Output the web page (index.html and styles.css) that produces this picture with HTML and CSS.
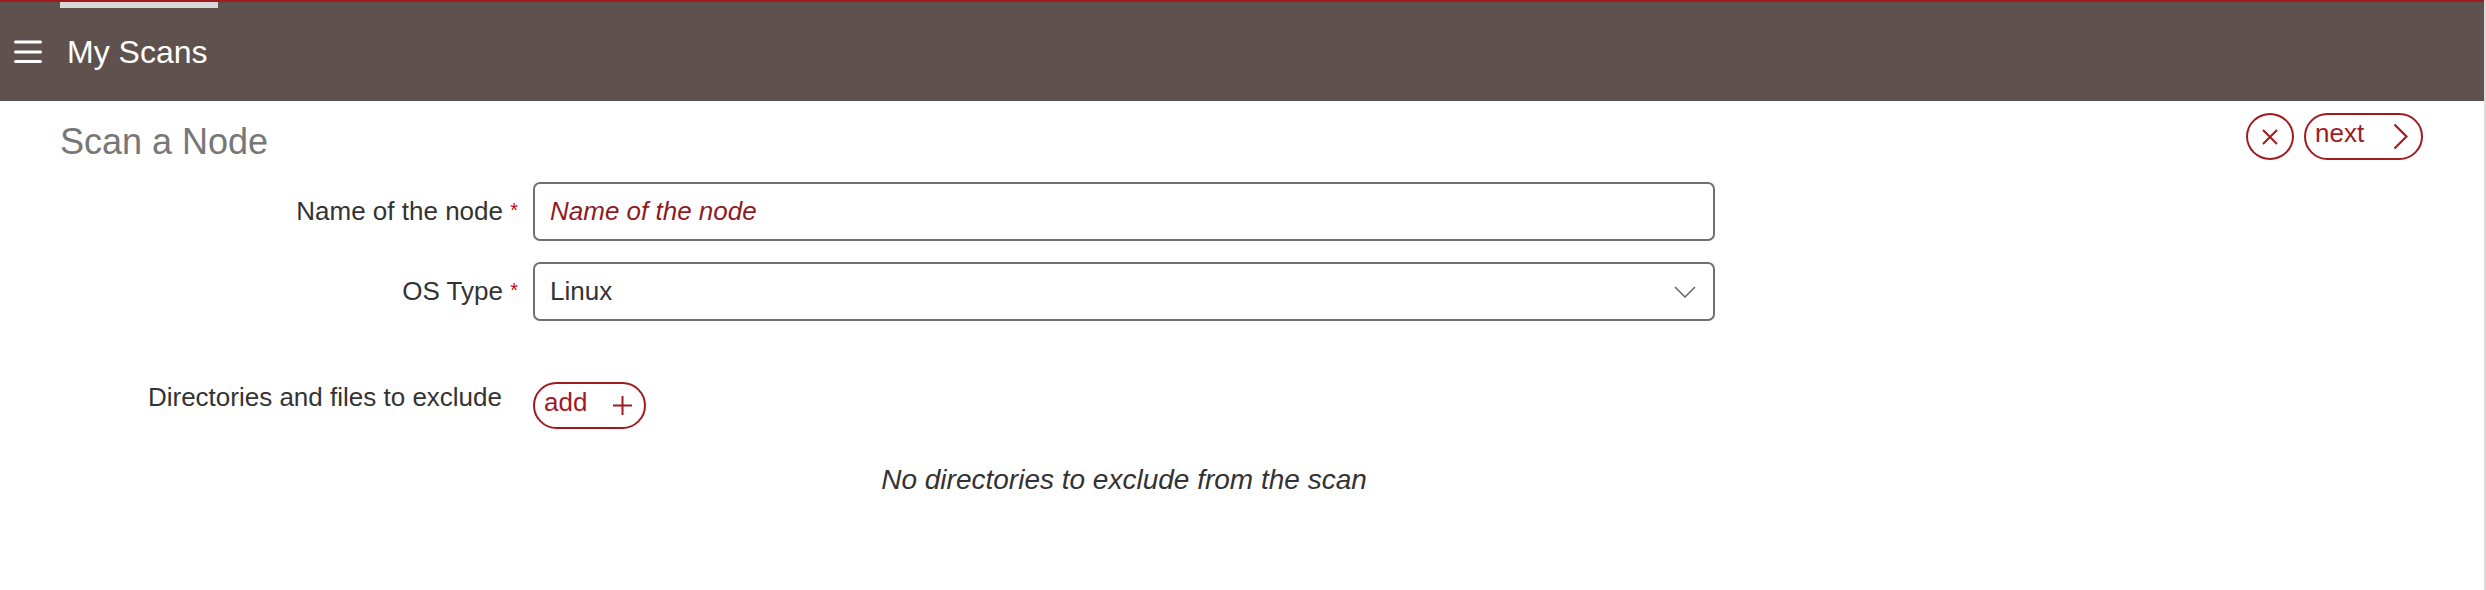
FILE: index.html
```html
<!DOCTYPE html>
<html lang="en">
<head>
<meta charset="utf-8">
<title>My Scans</title>
<link rel="stylesheet" href="styles.css">
</head>
<body>
<div class="page">
  <div class="app">
    <header class="topbar">
      <span class="tab-indicator"></span>
      <svg class="hamburger" width="28" height="24" viewBox="0 0 28 24" aria-hidden="true">
        <path d="M1.5 2H26.5M1.5 12H26.5M1.5 21.5H26.5" stroke="#fff" stroke-width="3" stroke-linecap="round" fill="none"/>
      </svg>
      <h1 class="app-title">My Scans</h1>
    </header>

    <main class="content">
      <div class="title-row">
        <h2 class="page-title">Scan a Node</h2>
        <div class="actions">
          <button class="btn-circle" type="button" aria-label="Cancel">
            <svg width="16" height="16" viewBox="0 0 16 16" aria-hidden="true">
              <path d="M1 1L15 15M15 1L1 15" stroke="currentColor" stroke-width="2" fill="none"/>
            </svg>
          </button>
          <button class="btn-pill btn-next" type="button">
            <span class="btn-text">next</span>
            <svg width="15" height="27" viewBox="0 0 15 27" aria-hidden="true">
              <path d="M1.5 1.5L13.5 13.5L1.5 25.5" stroke="currentColor" stroke-width="2.2" fill="none"/>
            </svg>
          </button>
        </div>
      </div>

      <form class="form-grid">
        <label class="field-label" for="node-name">Name of the node <span class="req">*</span></label>
        <input class="text-input" id="node-name" type="text" placeholder="Name of the node">

        <label class="field-label">OS Type <span class="req">*</span></label>
        <div class="select">
          <span>Linux</span>
          <svg width="22" height="12" viewBox="0 0 22 12" aria-hidden="true">
            <path d="M1 1L11 11L21 1" stroke="#666" stroke-width="1.5" fill="none"/>
          </svg>
        </div>

        <div class="field-label no-req add-row">Directories and files to exclude</div>
        <div class="add-row">
          <button class="btn-pill btn-add" type="button">
            <span class="btn-text">add</span>
            <svg width="19" height="19" viewBox="0 0 19 19" aria-hidden="true">
              <path d="M9.5 0V19M0 9.5H19" stroke="currentColor" stroke-width="2" fill="none"/>
            </svg>
          </button>
        </div>

        <p class="empty">No directories to exclude from the scan</p>
      </form>
    </main>
  </div>
  <div class="edge"></div>
</div>
</body>
</html>
```

FILE: styles.css
```css
html, body {
  margin: 0;
  padding: 0;
  background: #fff;
}

body {
  font-family: "Liberation Sans", Arial, Helvetica, sans-serif;
  color: #333;
}

.page {
  display: flex;
  min-height: 100vh;
}

.app {
  flex: 1;
  min-width: 0;
}

.edge {
  width: 2px;
  background: #dadada;
}

/* Header */
.topbar {
  position: relative;
  display: flex;
  align-items: center;
  height: 99px;
  border-top: 2px solid #a01b1f;
  background: #5f524e;
  padding-left: 14px;
}

.tab-indicator {
  position: absolute;
  left: 60px;
  top: 0;
  width: 158px;
  height: 6px;
  background: #d9d9d9;
}

.hamburger {
  display: block;
  flex: none;
}

.app-title {
  margin: 2px 0 0 25px;
  font-size: 32px;
  font-weight: normal;
  color: #fff;
}

/* Content */
.content {
  padding: 12px 61px 0 60px;
}

.title-row {
  display: flex;
  justify-content: space-between;
  align-items: flex-start;
}

.page-title {
  margin: 11px 0 0;
  font-size: 36px;
  line-height: 36px;
  font-weight: normal;
  color: #777;
}

.actions {
  display: flex;
  gap: 10px;
}

.btn-circle {
  box-sizing: border-box;
  width: 48px;
  height: 47px;
  border: 2px solid #a01b1f;
  border-radius: 50%;
  background: #fff;
  color: #a01b1f;
  padding: 0;
  display: flex;
  align-items: center;
  justify-content: center;
}

.btn-circle svg {
  display: block;
}

.btn-pill {
  box-sizing: border-box;
  height: 47px;
  border: 2px solid #a01b1f;
  border-radius: 24px;
  background: #fff;
  color: #a01b1f;
  font-family: "Liberation Sans", Arial, Helvetica, sans-serif;
  font-size: 26px;
  display: flex;
  align-items: center;
  justify-content: space-between;
  padding: 0 13px 0 9px;
}

.btn-pill svg {
  display: block;
  flex: none;
}

.btn-text {
  margin-bottom: 7px;
}

.btn-next {
  width: 119px;
}

.btn-add {
  width: 113px;
  padding-right: 12px;
}

/* Form */
.form-grid {
  display: grid;
  grid-template-columns: 458px 1182px;
  column-gap: 15px;
  row-gap: 21px;
  align-items: center;
  margin: 22px 0 0;
}

.field-label {
  text-align: right;
  font-size: 26px;
  color: #333;
  white-space: nowrap;
}

.req {
  color: #d0021b;
  font-size: 20px;
  vertical-align: 3px;
}

.field-label.no-req {
  padding-right: 16px;
}

.text-input,
.select {
  box-sizing: border-box;
  width: 100%;
  height: 59px;
  border: 2px solid #707070;
  border-radius: 7px;
  padding: 0 17px 0 15px;
  font-family: "Liberation Sans", Arial, Helvetica, sans-serif;
  font-size: 26px;
  color: #333;
  background: #fff;
  margin: 0;
}

.text-input::placeholder {
  color: #8e1b1f;
  font-style: italic;
  opacity: 1;
}

.select {
  display: flex;
  align-items: center;
  justify-content: space-between;
}

.add-row {
  align-self: start;
  margin-top: 40px;
}

.field-label.add-row {
  line-height: 30px;
}

.empty {
  grid-column: 2;
  margin: 14px 0 0;
  text-align: center;
  font-size: 28px;
  line-height: 32px;
  font-style: italic;
  color: #333;
}
```
